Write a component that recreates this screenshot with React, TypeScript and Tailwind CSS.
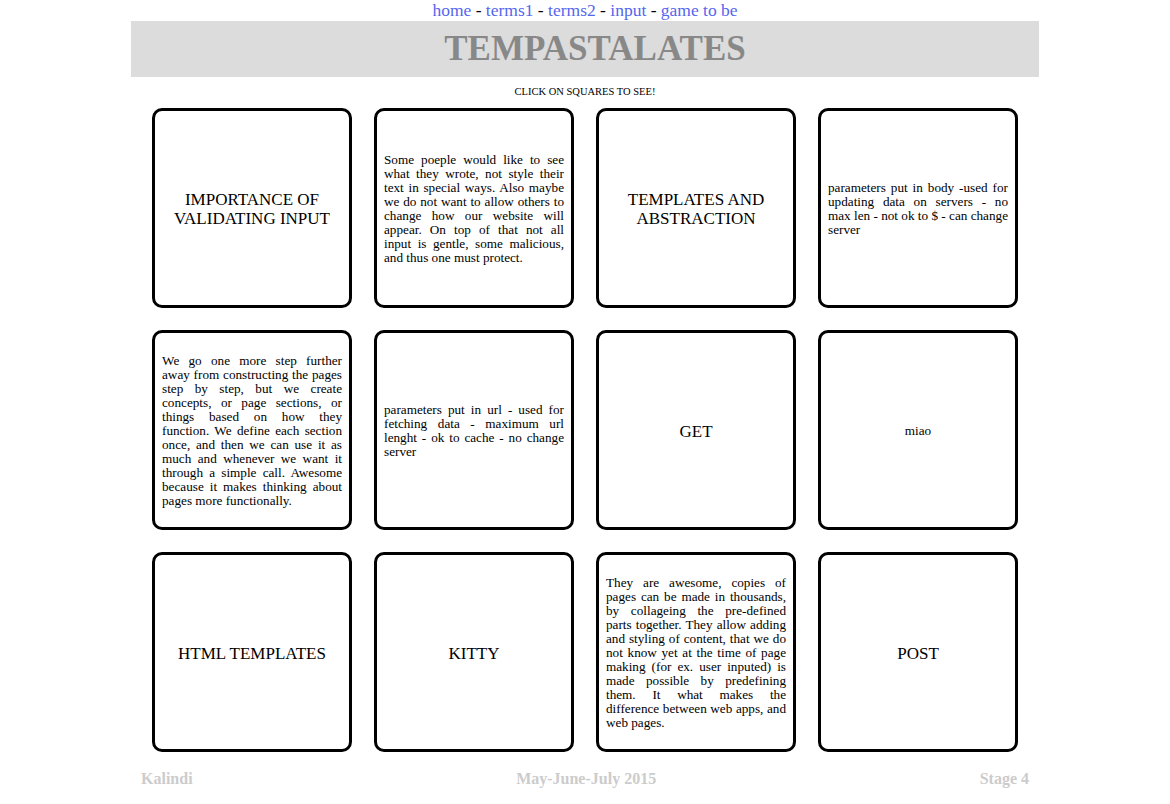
import React from 'react';

type Card = { text: string; title?: boolean; center?: boolean };

const cards: Card[] = [
  { text: 'IMPORTANCE OF VALIDATING INPUT', title: true },
  {
    text: 'Some poeple would like to see what they wrote, not style their text in special ways. Also maybe we do not want to allow others to change how our website will appear. On top of that not all input is gentle, some malicious, and thus one must protect.',
  },
  { text: 'TEMPLATES AND ABSTRACTION', title: true },
  { text: 'parameters put in body -used for updating data on servers - no max\u00a0len - not ok to $ - can change server' },
  {
    text: 'We go one more step further away from constructing the pages step by step, but we create concepts, or page sections, or things based on how they function. We define each section once, and then we can use it as much and whenever we want it through a simple call. Awesome because it makes thinking about pages more functionally.',
  },
  { text: 'parameters put in url - used for fetching data - maximum url lenght - ok to cache - no change server' },
  { text: 'GET', title: true },
  { text: 'miao', center: true },
  { text: 'HTML TEMPLATES', title: true },
  { text: 'KITTY', title: true },
  {
    text: 'They are awesome, copies of pages can be made in thousands, by collageing the pre-defined parts together. They allow adding and styling of content, that we do not know yet at the time of page making (for ex. user inputed) is made possible by predefining them. It what makes the difference between web apps, and web pages.',
  },
  { text: 'POST', title: true },
];

const links = ['home', 'terms1', 'terms2', 'input', 'game to be'];

export default function App() {
  return (
    <div className="min-h-screen bg-white font-['Liberation_Serif',serif] text-black">
      <nav className="text-center text-[17.5px] leading-[20px] h-[21px]">
        {links.map((l, i) => (
          <React.Fragment key={l}>
            {i > 0 && <span> - </span>}
            <a href="#" className="text-[#5566ee]">{l}</a>
          </React.Fragment>
        ))}
      </nav>

      <div className="w-[908px] mx-auto">
        <header className="h-[56px] bg-[#dcdcdc] flex items-center justify-center pl-[20px]">
          <h1 className="text-[35px] font-bold text-[#888888]">TEMPASTALATES</h1>
        </header>

        <p className="mt-[10px] text-center text-[10.5px] leading-[10px]">CLICK ON SQUARES TO SEE!</p>

        <div className="grid grid-cols-4 px-[10px]">
          {cards.map((c, i) => (
            <div key={i} className="p-[11px]">
              <div className="w-[200px] h-[200px] border-[3px] border-black rounded-[10px] flex items-center justify-center px-[7px] pt-[2px] cursor-pointer">
                {c.title ? (
                  <p className="text-center text-[17px] leading-[19px]">{c.text}</p>
                ) : (
                  <p className={`${c.center ? 'text-center' : 'text-justify'} text-[13.2px] leading-[14px] w-full`}>
                    {c.text}
                  </p>
                )}
              </div>
            </div>
          ))}
        </div>

        <footer className="flex justify-between px-[10px] pt-[4px] text-[16px] font-bold text-[#cccccc]">
          <span>Kalindi</span>
          <span>May-June-July 2015</span>
          <span>Stage 4</span>
        </footer>
      </div>
    </div>
  );
}
